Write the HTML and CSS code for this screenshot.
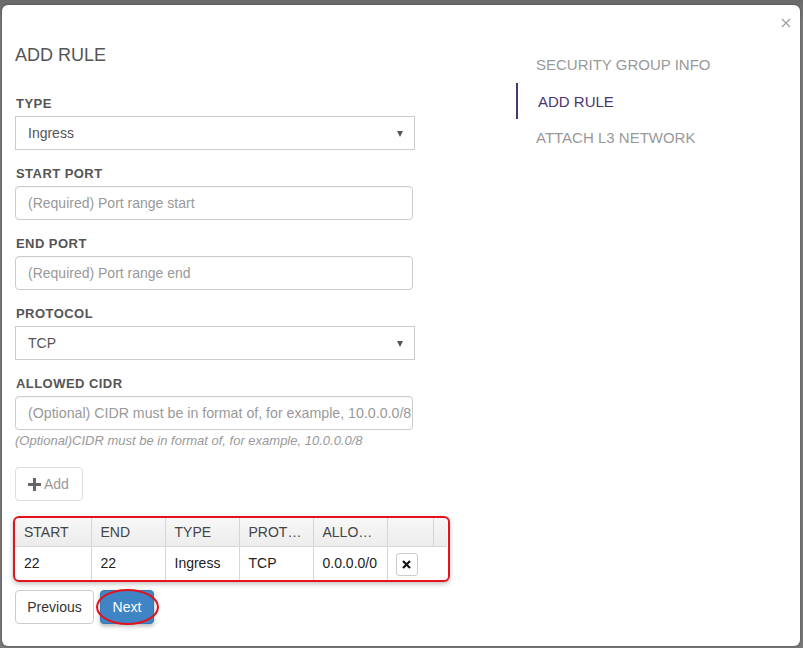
FILE: index.html
```html
<!DOCTYPE html>
<html>
<head>
<meta charset="utf-8">
<link rel="stylesheet" href="styles.css">
</head>
<body>
<div class="modal">
  <button class="close" aria-label="close">
    <svg width="10" height="10" viewBox="0 0 10 10"><path d="M1 1L9 9M9 1L1 9" stroke="#9a9a9a" stroke-width="1.1" fill="none"/></svg>
  </button>
  <div class="content">
    <div class="form">
      <h2 class="title">ADD RULE</h2>
      <div class="group">
        <label class="label">TYPE</label>
        <div class="select"><span>Ingress</span><i class="caret"></i></div>
      </div>
      <div class="group">
        <label class="label">START PORT</label>
        <div class="input">(Required) Port range start</div>
      </div>
      <div class="group">
        <label class="label">END PORT</label>
        <div class="input">(Required) Port range end</div>
      </div>
      <div class="group">
        <label class="label">PROTOCOL</label>
        <div class="select"><span>TCP</span><i class="caret"></i></div>
      </div>
      <div class="group last">
        <label class="label">ALLOWED CIDR</label>
        <div class="input big">(Optional) CIDR must be in format of, for example, 10.0.0.0/8</div>
        <div class="help">(Optional)CIDR must be in format of, for example, 10.0.0.0/8</div>
      </div>
      <button class="btn add">
        <svg width="13" height="13" viewBox="0 0 13 13"><path d="M5 0h3v5h5v3H8v5H5V8H0V5h5z" fill="#666"/></svg>
        <span>Add</span>
      </button>
      <div class="table-wrap">
        <table class="rules">
          <colgroup>
            <col class="c1"><col class="c2"><col class="c3"><col class="c4"><col class="c5"><col class="c6"><col class="c7">
          </colgroup>
          <thead>
            <tr><th>START</th><th>END</th><th>TYPE</th><th>PROT…</th><th>ALLO…</th><th></th><th class="pad"></th></tr>
          </thead>
          <tbody>
            <tr><td>22</td><td>22</td><td>Ingress</td><td>TCP</td><td>0.0.0.0/0</td><td class="act"><button class="del"><svg width="9" height="9" viewBox="0 0 9 9"><path d="M1 1L8 8M8 1L1 8" stroke="#111" stroke-width="2.2" fill="none"/></svg></button></td><td class="pad"></td></tr>
          </tbody>
        </table>
      </div>
      <div class="actions">
        <button class="btn prev">Previous</button>
        <button class="btn next">Next<span class="ring"></span></button>
      </div>
    </div>
    <ul class="nav">
      <li>SECURITY GROUP INFO</li>
      <li class="active">ADD RULE</li>
      <li>ATTACH L3 NETWORK</li>
    </ul>
  </div>
</div>
</body>
</html>
```

FILE: styles.css
```css
* { box-sizing: border-box; }
html, body { margin: 0; padding: 0; }
body {
  width: 803px;
  height: 648px;
  overflow: hidden;
  background: linear-gradient(#6a6a6a, #7a7a7a 20px, #787878);
  font-family: "Liberation Sans", Arial, sans-serif;
  padding: 5px 3px 2px 2px;
}
.modal {
  position: relative;
  height: 641px;
  background: #fff;
  border-radius: 6px;
  box-shadow: 0 0 3px rgba(0,0,0,0.35);
}
.close {
  position: absolute;
  top: 12px;
  right: 8px;
  width: 12px;
  height: 12px;
  padding: 0;
  border: 0;
  background: transparent;
  display: flex;
  align-items: center;
  justify-content: center;
}
.content {
  display: flex;
  padding-left: 13px;
}
.form {
  width: 436px;
  padding-top: 40px;
}
.title {
  margin: 0 0 31px;
  font-size: 18px;
  line-height: 20px;
  font-weight: normal;
  color: #555;
}
.group { margin-bottom: 16px; width: 400px; }
.group.last { margin-bottom: 0; }
.label {
  display: block;
  font-size: 13px;
  line-height: 15px;
  font-weight: bold;
  letter-spacing: 0.45px;
  color: #555;
  margin: 0 0 5px 1px;
}
.select {
  height: 34px;
  border: 1px solid #ccc;
  display: flex;
  align-items: center;
  justify-content: space-between;
  padding: 0 11px 0 12px;
  font-size: 14px;
  color: #555;
}
.caret {
  width: 0;
  height: 0;
  border-left: 3.5px solid transparent;
  border-right: 3.5px solid transparent;
  border-top: 6px solid #555;
  margin-top: 1px;
}
.input {
  width: 398px;
  height: 34px;
  border: 1px solid #ccc;
  border-radius: 4px;
  padding: 0 12px;
  font-size: 14px;
  line-height: 32px;
  color: #999;
  white-space: nowrap;
  overflow: hidden;
  box-shadow: inset 0 1px 1px rgba(0,0,0,0.04);
}
.input.big { font-size: 14.2px; }
.help {
  font-size: 13px;
  font-style: italic;
  color: #999;
  margin-top: 3px;
  line-height: 15px;
}
.btn {
  font-family: "Liberation Sans", Arial, sans-serif;
  font-size: 14px;
  height: 34px;
  border: 1px solid #ccc;
  border-radius: 4px;
  background: #fff;
  color: #333;
  padding: 0 12px;
  display: flex;
  align-items: center;
  gap: 3px;
}
.add {
  margin-top: 19px;
  width: 68px;
  color: #999;
  border-color: #ddd;
}
.table-wrap {
  position: relative;
  margin-top: 17px;
  width: 432px;
}
.table-wrap::after {
  content: "";
  position: absolute;
  left: -2px;
  top: -2px;
  right: -3px;
  bottom: -2px;
  border: 2px solid #e3121b;
  border-radius: 6px;
  box-shadow: 0 2px 5px rgba(0,0,0,0.25);
  pointer-events: none;
}
.rules {
  border-collapse: collapse;
  table-layout: fixed;
  width: 432px;
  font-size: 14px;
}
.c1 { width: 76px; }
.c2 { width: 74px; }
.c3 { width: 74px; }
.c4 { width: 74px; }
.c5 { width: 74px; }
.c6 { width: 46px; }
.c7 { width: 14px; }
.rules th {
  height: 28px;
  text-align: left;
  font-weight: normal;
  color: #444;
  padding: 0 8px 0 9px;
  background: linear-gradient(#f7f7f7, #ececec);
  border-right: 1px solid #d6d6d6;
  border-bottom: 1px solid #d6d6d6;
  white-space: nowrap;
  overflow: hidden;
}
.rules td {
  height: 34px;
  padding: 0 8px 0 9px;
  color: #222;
  border-right: 1px solid #d6d6d6;
  white-space: nowrap;
}
.rules th.pad, .rules td.pad { border-right: 0; padding: 0; }
.rules td.act { padding: 0 0 0 8px; border-right: 0; }
.del {
  width: 22px;
  height: 23px;
  border: 1px solid #ccc;
  border-radius: 3px;
  background: #fff;
  padding: 0;
  display: flex;
  align-items: center;
  justify-content: center;
  margin-top: 2px;
}
.actions {
  display: flex;
  gap: 6px;
  margin-top: 10px;
}
.prev { width: 79px; justify-content: center; }
.next {
  position: relative;
  width: 54px;
  justify-content: center;
  background: #3f84c5;
  border-color: #3677b5;
  color: #fff;
  box-shadow: 0 2px 4px rgba(0,0,0,0.3);
}
.ring {
  position: absolute;
  left: -5px;
  top: -2px;
  width: 63px;
  height: 36px;
  border: 2px solid #e3121b;
  border-radius: 50%;
}
.nav {
  list-style: none;
  margin: 42px 0 0 65px;
  padding: 0;
}
.nav li {
  height: 36px;
  line-height: 38px;
  padding-left: 20px;
  font-size: 15px;
  color: #999;
}
.nav li:first-child { line-height: 36px; }
.nav li.active {
  border-left: 2px solid #4a3570;
  color: #4a3570;
}
```
